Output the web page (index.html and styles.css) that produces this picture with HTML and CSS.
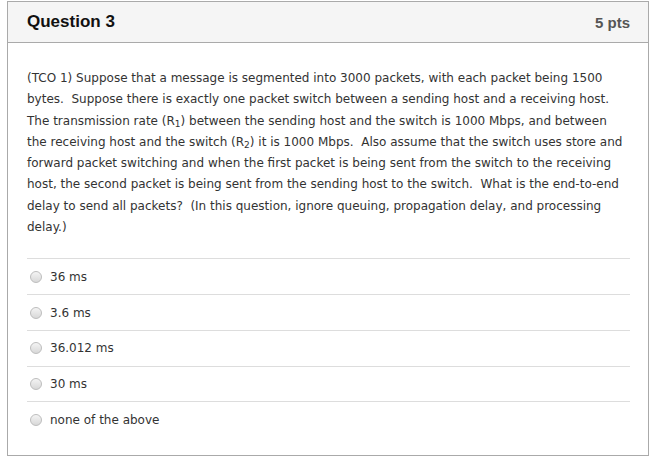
FILE: index.html
```
<!DOCTYPE html>
<html>
<head>
<meta charset="utf-8">
<link rel="stylesheet" href="styles.css">
</head>
<body>
<div class="card">
  <div class="card-header">
    <span class="title">Question 3</span>
    <span class="pts">5 pts</span>
  </div>
  <div class="card-body">
    <p class="question">(TCO 1) Suppose that a message is segmented into 3000 packets, with each packet being 1500 bytes.&nbsp; Suppose there is exactly one packet switch between a sending host and a receiving host.&nbsp; The transmission rate (R<sub>1</sub>) between the sending host and the switch is 1000 Mbps, and between the receiving host and the switch (R<sub>2</sub>) it is 1000 Mbps.&nbsp; Also assume that the switch uses store and forward packet switching and when the first packet is being sent from the switch to the receiving host, the second packet is being sent from the sending host to the switch.&nbsp; What is the end-to-end delay to send all packets?&nbsp; (In this question, ignore queuing, propagation delay, and processing delay.)</p>
    <div class="answers">
      <label class="answer"><span class="radio"></span><span>36 ms</span></label>
      <label class="answer"><span class="radio"></span><span>3.6 ms</span></label>
      <label class="answer"><span class="radio"></span><span>36.012 ms</span></label>
      <label class="answer"><span class="radio"></span><span>30 ms</span></label>
      <label class="answer"><span class="radio"></span><span>none of the above</span></label>
    </div>
  </div>
</div>
</body>
</html>
```
FILE: styles.css
```
html, body {
  margin: 0;
  padding: 0;
  background: #fff;
}
body {
  padding: 1px 3px 0 7px;
}
.card {
  width: 640px;
  height: 453px;
  border: 1px solid #aaaaaa;
  box-sizing: content-box;
  display: flex;
  flex-direction: column;
}
.card-header {
  height: 40px;
  background: #f5f5f5;
  border-bottom: 1px solid #aaaaaa;
  display: flex;
  align-items: center;
  justify-content: space-between;
  padding: 0 18px 0 19px;
  font-family: "Liberation Sans", Arial, sans-serif;
  font-weight: bold;
}
.title {
  font-size: 17px;
  color: #111;
}
.pts {
  font-size: 15px;
  color: #555;
}
.card-body {
  padding: 25px 18px 0 19px;
  font-family: "DejaVu Sans", Verdana, sans-serif;
  font-size: 12px;
  color: #333;
}
.question {
  margin: 0;
  line-height: 21.3px;
}
sub {
  font-size: 9px;
  line-height: 0;
  vertical-align: -2px;
}
.answers {
  margin-top: 20px;
}
.answer {
  display: flex;
  align-items: center;
  height: 34.75px;
  border-top: 1px solid #dddddd;
  padding-left: 3px;
  gap: 8px;
}
.radio {
  border-radius: 50%;
  border: 1px solid #bdbdbd;
  background: linear-gradient(#f4f4f4, #d8d8d8);
  box-sizing: border-box;
  flex: none;
  width: 12px;
  height: 12px;
}
```
